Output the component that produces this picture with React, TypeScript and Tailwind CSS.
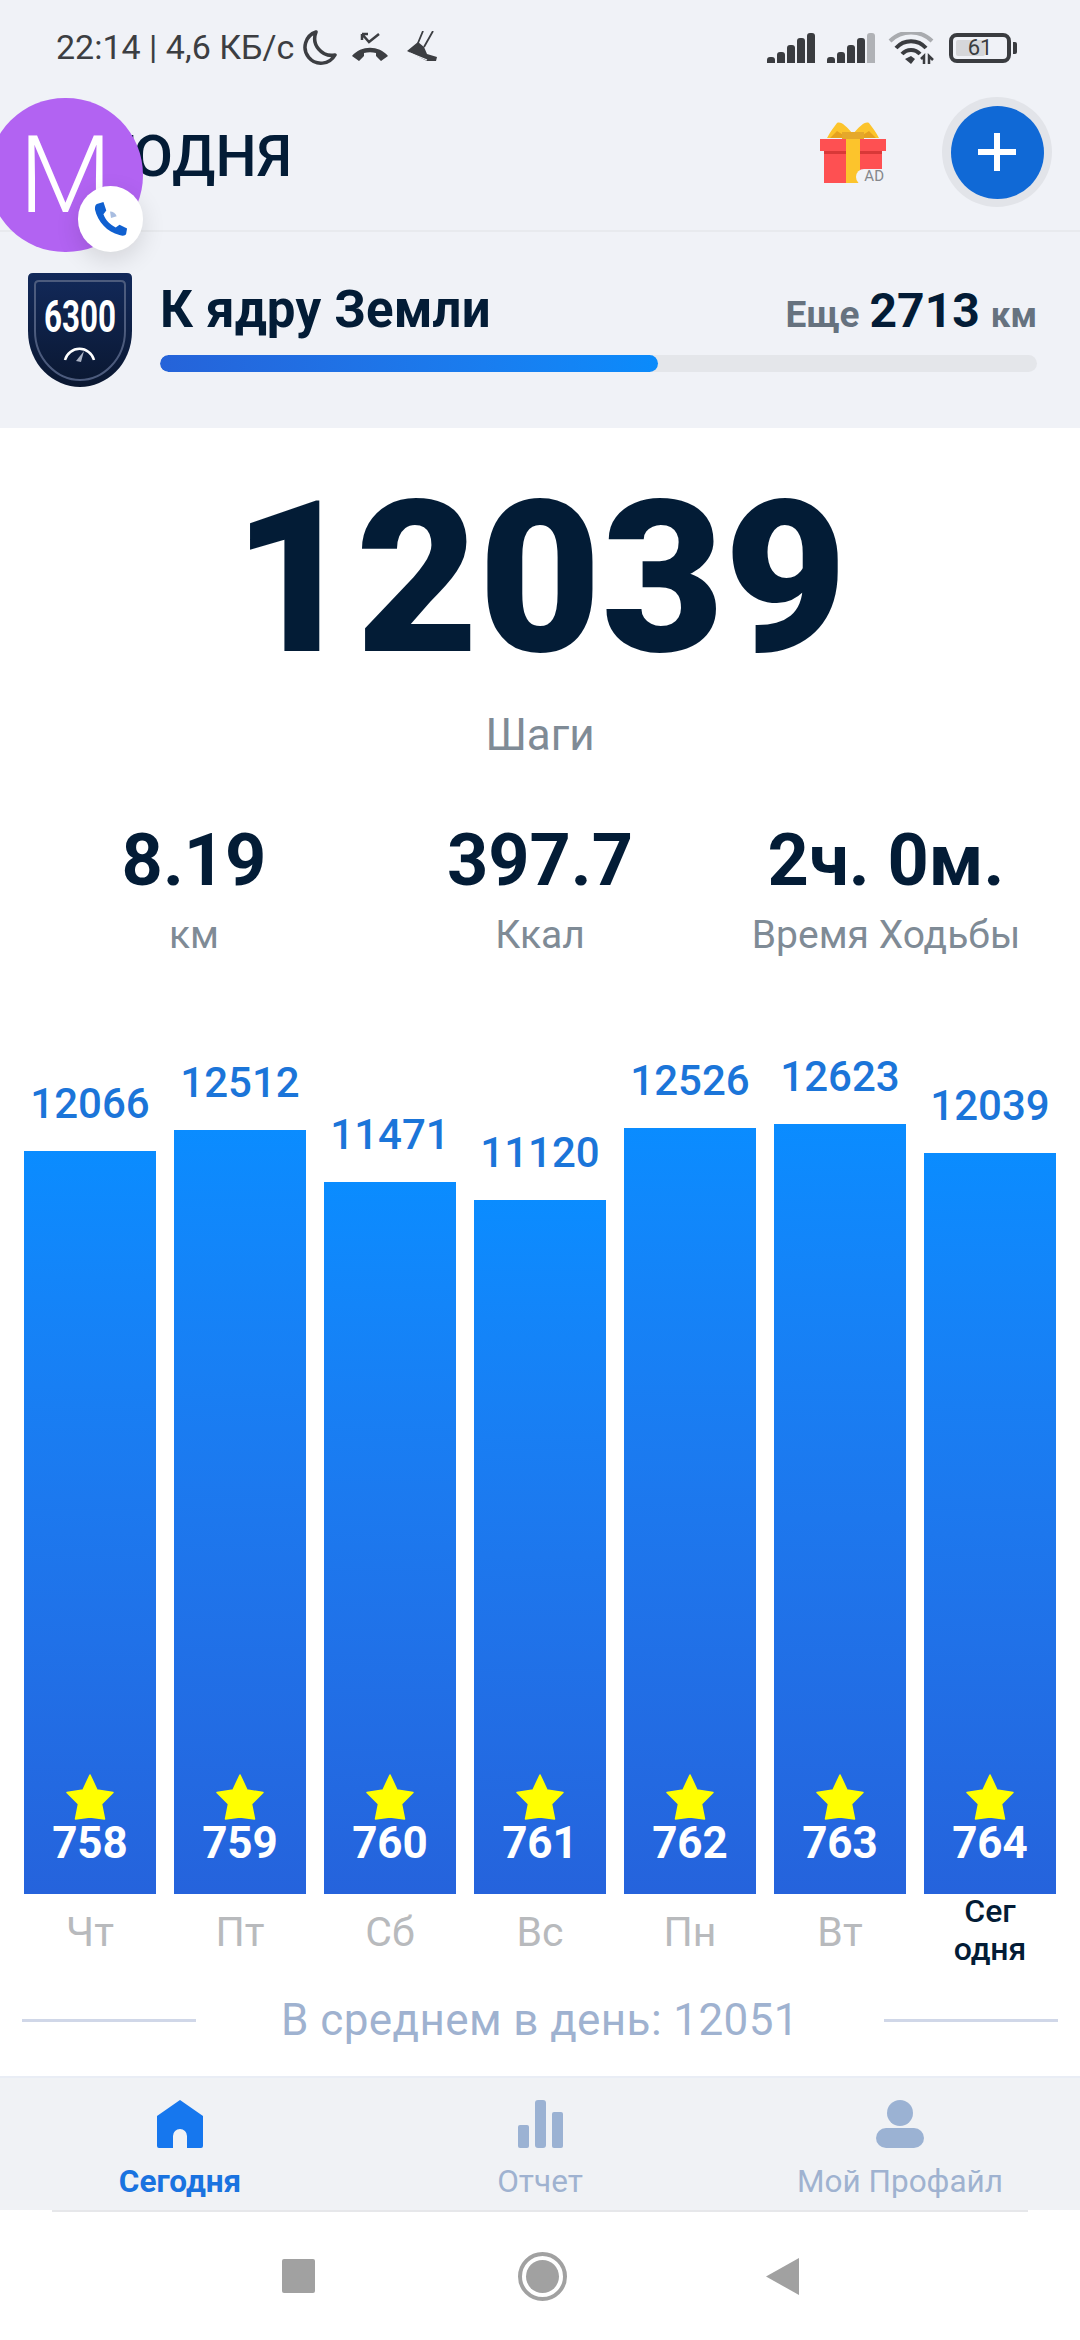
import React from "react";

const bars = [
  { v: "12066", h: 743, n: "758", d: "Чт" },
  { v: "12512", h: 764, n: "759", d: "Пт" },
  { v: "11471", h: 712, n: "760", d: "Сб" },
  { v: "11120", h: 694, n: "761", d: "Вс" },
  { v: "12526", h: 766, n: "762", d: "Пн" },
  { v: "12623", h: 770, n: "763", d: "Вт" },
  { v: "12039", h: 741, n: "764", d: "" },
];

function Star() {
  return (
    <svg width="48" height="46" viewBox="0 0 48 46">
      <path d="M24 1 L31 16 L47 18.500 L35.500 30 L38.500 45 L24 43 L9.500 45 L12.500 30 L1 18.500 L17 16 Z" fill="#ffff00" stroke="#ffff00" strokeWidth="1.500" strokeLinejoin="round" />
    </svg>
  );
}

function Signal({ last }: { last: string }) {
  const hs = [6, 11, 18, 25, 30];
  return (
    <div className="flex items-end gap-[2px] h-[30px]">
      {hs.map((h, i) => (
        <div key={i} className="w-[8px] rounded-t-[3px]" style={{ height: h, background: i === 4 ? last : "#3a3c40" }} />
      ))}
    </div>
  );
}

export default function App() {
  return (
    <div className="relative w-[1080px] h-[2340px] bg-white overflow-hidden flex flex-col text-[#031c36] font-['Roboto',sans-serif]">
      <div className="bg-[#f0f2f7] h-[428px] shrink-0 flex flex-col">
        {/* status bar */}
        <div className="h-[96px] flex items-center pl-[56px] pr-[63px] justify-between shrink-0">
          <div className="flex items-center text-[#3c3e42] text-[34px] h-[60px] -mt-[2px]">
            <span>22:14 | 4,6 КБ/с</span>
            <svg className="ml-[8px]" width="36" height="36" viewBox="0 0 36 36"><path d="M14 3 A16 16 0 1 0 33 26 A17 17 0 0 1 14 3 Z" fill="none" stroke="#3c3e42" strokeWidth="3.500" strokeLinejoin="round" /></svg>
            <svg className="ml-[13px]" width="38" height="30" viewBox="0 0 38 30"><path d="M1 24 C10 13 28 13 37 24 L30 29 L25 24 L25 21 C21 20 17 20 13 21 L13 24 L8 29 Z" fill="#3c3e42" /><path d="M11 2 L18 10 L28 2 M11 2 L11 8 M11 2 L17 2" fill="none" stroke="#3c3e42" strokeWidth="2.500" /></svg>
            <svg className="ml-[18px]" width="30" height="32" viewBox="0 0 30 32"><path d="M16 0 L11 12 M26 0 L17 16" stroke="#3c3e42" strokeWidth="1.800" fill="none" /><path d="M0 20 L11 11 L17 16 L20 23 L30 26 L29 30 L20 30 Z" fill="#3c3e42" /><path d="M3 22 L20 29" stroke="#f0f2f7" strokeWidth="1.300" /></svg>
          </div>
          <div className="flex items-center">
            <Signal last="#3a3c40" />
            <div className="w-[12px]" />
            <Signal last="#b0b2b6" />
            <svg className="ml-[13px]" width="46" height="33" viewBox="0 0 46 33">
              <path d="M2 9 A30 30 0 0 1 44 9" fill="none" stroke="#a9abaf" strokeWidth="4" />
              <path d="M8 16 A20 20 0 0 1 38 16" fill="none" stroke="#3a3c40" strokeWidth="4" />
              <path d="M14 22 A12 12 0 0 1 32 22" fill="none" stroke="#3a3c40" strokeWidth="4" />
              <path d="M17 27 L23 24 L27 27 L23 32 Z" fill="#3a3c40" />
              <path d="M33 27 L36 24 V32 M41 32 V24 L45 28" stroke="#3a3c40" strokeWidth="2.500" fill="none" />
            </svg>
            <div className="ml-[15px] w-[62px] h-[30px] rounded-[8px] border-[4px] border-[#3a3c40] p-[3px] relative flex">
              <div className="w-[61%] bg-[#d6d7da] rounded-[2px]" />
              <span className="absolute inset-0 flex items-center justify-center text-[22px] leading-none text-[#3a3c40]">61</span>
            </div>
            <div className="ml-[2px] w-[4px] h-[12px] bg-[#3a3c40] rounded-r-[2px]" />
          </div>
        </div>
        {/* app bar */}
        <div className="h-[136px] flex items-center border-b-2 border-[#e8eaee] pl-[32px] pr-[28px] pb-[22px] shrink-0">
          <span className="text-[58px] font-medium leading-none uppercase mt-[7px]">Сегодня</span>
          <div className="ml-auto flex items-center">
            <div className="relative w-[66px] h-[61px]">
              <svg width="66" height="61" viewBox="0 0 66 61">
                <path d="M33 12 C26 4 21 -1 17 1 C14 5 10 10 7 16 H33 Z M33 12 C40 4 45 -1 49 1 C52 5 56 10 59 16 H33 Z" fill="#fcc42c" />
                <path d="M10 16 L17 9 L28 16 Z M56 16 L49 9 L38 16 Z" fill="#e5a11f" />
                <rect x="22" y="10" width="22" height="7" fill="#e5a82a" />
                <rect x="4" y="29" width="58" height="32" fill="#fe5052" />
                <rect x="0" y="17" width="66" height="12" fill="#fe5052" />
                <rect x="4" y="29" width="58" height="3" fill="#d93838" />
                <rect x="26" y="17" width="14" height="44" fill="#fcc42c" />
              </svg>
              <span className="absolute left-[36px] top-[47px] w-[28px] h-[16px] bg-[#f0f2f7] rounded-l-full flex items-center justify-end text-[15px] leading-none text-[#85878b]">AD</span>
            </div>
            <div className="ml-[56px] w-[110px] h-[110px] rounded-full bg-[#e2e4e9] flex items-center justify-center">
              <div className="w-[93px] h-[93px] rounded-full bg-[#1069d6] flex items-center justify-center">
                <svg width="38" height="38" viewBox="0 0 38 38"><path d="M19 0 V38 M0 19 H38" stroke="#fff" strokeWidth="6" /></svg>
              </div>
            </div>
          </div>
        </div>
        {/* goal */}
        <div className="flex items-start pl-[28px] pr-[43px] pt-[41px]">
          <svg width="104" height="114" viewBox="0 0 104 114" className="shrink-0">
            <defs>
              <linearGradient id="sh" x1="0" y1="0" x2="0" y2="1"><stop offset="0" stopColor="#12295a" /><stop offset="1" stopColor="#0a1730" /></linearGradient>
            </defs>
            <path d="M5 0 H99 Q104 0 104 5 V58 C104 92 78 114 52 114 C26 114 0 92 0 58 V5 Q0 0 5 0 Z" fill="url(#sh)" />
            <path d="M11 8 H93 Q97 8 97 12 V58 C97 86 75 107 52 107 C29 107 7 86 7 58 V12 Q7 8 11 8 Z" fill="none" stroke="#4c5b7d" strokeWidth="2" />
            <path d="M37 87 A15 15 0 0 1 66 87" fill="none" stroke="#fff" strokeWidth="2.500" />
            <path d="M48 88 L56 78 L53 89 Z" fill="#aab2c4" />
            <text x="52" y="59" textAnchor="middle" fill="#fff" fontSize="45" fontWeight="700" fontFamily="Roboto" textLength="72" lengthAdjust="spacingAndGlyphs">6300</text>
          </svg>
          <div className="flex-1 ml-[28px] pt-[8px]">
            <div className="flex items-baseline h-[58px]">
              <span className="text-[51px] font-bold leading-[58px] tracking-[0.2px]">К ядру Земли</span>
              <span className="ml-auto text-[37px] font-bold text-[#66727f] leading-none">Еще</span>
              <span className="ml-[10px] text-[48px] font-bold leading-none">2713</span>
              <span className="ml-[11px] text-[35px] font-bold text-[#66727f] leading-none">км</span>
            </div>
            <div className="mt-[16px] h-[17px] rounded-full bg-[#e4e6ea] overflow-hidden">
              <div className="h-full w-[56.800%] rounded-full bg-gradient-to-r from-[#2563d9] to-[#0a8bfb]" />
            </div>
          </div>
        </div>
      </div>

      {/* main */}
      <div className="flex flex-col items-center shrink-0">
        <div className="text-[212px] font-black leading-none mt-[45px] h-[220px]">12039</div>
        <div className="text-[44px] text-[#7f8b96] leading-none mt-[20px]">Шаги</div>
      </div>
      <div className="grid grid-cols-[388px_304px_388px] mt-[64px] shrink-0">
        {[["8.19", "км"], ["397.7", "Ккал"], ["2ч. 0м.", "Время Ходьбы"]].map(([a, b]) => (
          <div key={b} className="flex flex-col items-center whitespace-nowrap">
            <div className="text-[72px] font-bold leading-[80px]">{a}</div>
            <div className="text-[39px] text-[#7f8b96] leading-[44px] mt-[12px]">{b}</div>
          </div>
        ))}
      </div>

      {/* chart */}
      <div className="h-[937px] shrink-0 px-[24px] flex items-end gap-[18px]">
        {bars.map((b) => (
          <div key={b.n} className="w-[132px] flex flex-col items-center">
            <div className="text-[42px] leading-[48px] text-[#1b75d9] font-medium whitespace-nowrap mb-[23px]">{b.v}</div>
            <div className="w-full bg-gradient-to-b from-[#0a8cff] to-[#2563dc] flex flex-col items-center justify-end pb-[28px]" style={{ height: b.h }}>
              <Star />
              <div className="text-[44px] font-bold text-white leading-[46px]">{b.n}</div>
            </div>
          </div>
        ))}
      </div>
      <div className="h-[99px] shrink-0 px-[24px] flex gap-[18px]">
        {bars.map((b) => (
          <div key={b.n} className="w-[132px] text-center">
            {b.n === "764" ? (
              <div className="text-[32px] font-medium leading-[38px] text-[#031c36] -mt-[2px]">Сег<br />одня</div>
            ) : (
              <div className="text-[41px] leading-[46px] text-[#b8babd] pt-[15px]">{b.d}</div>
            )}
          </div>
        ))}
      </div>
      <div className="mx-[22px] h-[54px] shrink-0 flex items-center">
        <div className="w-[174px] h-[3px] bg-[#d0d7e8]" />
        <div className="flex-1 text-center text-[44px] text-[#9fb2d0] tracking-[0.4px]">В среднем в день: 12051</div>
        <div className="w-[174px] h-[3px] bg-[#d0d7e8]" />
      </div>

      {/* tab bar */}
      <div className="mt-[29px] h-[134px] shrink-0 bg-[#f0f2f5] border-t-2 border-[#e9edf5] grid grid-cols-3 text-[31.500px]">
        <div className="flex flex-col items-center">
          <svg className="mt-[22px]" width="46" height="48" viewBox="0 0 46 48"><path d="M23 0 L46 16 V46 Q46 48 44 48 H30 V36 A7 7 0 0 0 16 36 V48 H2 Q0 48 0 46 V16 Z" fill="#1677ee" /></svg>
          <span className="text-[#1a73e0] font-bold mt-[16px] leading-[36px]">Сегодня</span>
        </div>
        <div className="flex flex-col items-center">
          <svg className="mt-[22px]" width="45" height="48" viewBox="0 0 45 48"><rect x="0" y="25" width="11" height="23" rx="2" fill="#9bb2d3" /><rect x="17" y="0" width="11" height="48" rx="3" fill="#9bb2d3" /><rect x="34" y="12" width="11" height="36" rx="2" fill="#9bb2d3" /></svg>
          <span className="text-[#9fb2d0] mt-[16px] leading-[36px]">Отчет</span>
        </div>
        <div className="flex flex-col items-center">
          <svg className="mt-[22px]" width="48" height="48" viewBox="0 0 48 48"><circle cx="24" cy="13" r="13" fill="#9bb2d3" /><rect x="0" y="28" width="48" height="20" rx="10" fill="#9bb2d3" /></svg>
          <span className="text-[#9fb2d0] mt-[16px] leading-[36px]">Мой Профайл</span>
        </div>
      </div>
      <div className="mx-[52px] h-[2px] shrink-0 bg-[#e6e7ea]" />
      {/* nav bar */}
      <div className="h-[128px] shrink-0 flex items-center justify-center">
        <div className="w-[33px] h-[34px] bg-[#a1a1a1] rounded-[2px] mr-[203px]" />
        <div className="w-[49px] h-[49px] rounded-full border-[4px] border-[#a1a1a1] p-[4px]">
          <div className="w-full h-full rounded-full bg-[#a1a1a1]" />
        </div>
        <svg className="ml-[199px]" width="33" height="37" viewBox="0 0 33 37"><path d="M33 0 V37 L0 18.500 Z" fill="#a1a1a1" /></svg>
      </div>

      {/* floating avatar */}
      <div className="absolute left-[-12px] top-[98px] w-[155px] h-[154px] rounded-full bg-[#b263f2] flex items-center justify-center text-white text-[108px] leading-none font-['Roboto',sans-serif] font-light">M</div>
      <div className="absolute left-[78px] top-[186px] w-[65px] h-[66px] rounded-full bg-white shadow-[0_8px_24px_rgba(0,0,0,0.12)] flex items-center justify-center">
        <svg width="34" height="36" viewBox="0 0 36 38">
          <path d="M3 3 L10 1 L13 10 L10 14 C12 20 17 25 23 28 L27 25 L35 29 L34 35 C33 37 30 37 27 36 C14 33 4 22 1 9 C1 6 1 4 3 3 Z" fill="#1060d0" />
          <path d="M17 11 C20 11 23 13 24 16 L18 18 Z" fill="#a8bde0" />
        </svg>
      </div>
    </div>
  );
}
